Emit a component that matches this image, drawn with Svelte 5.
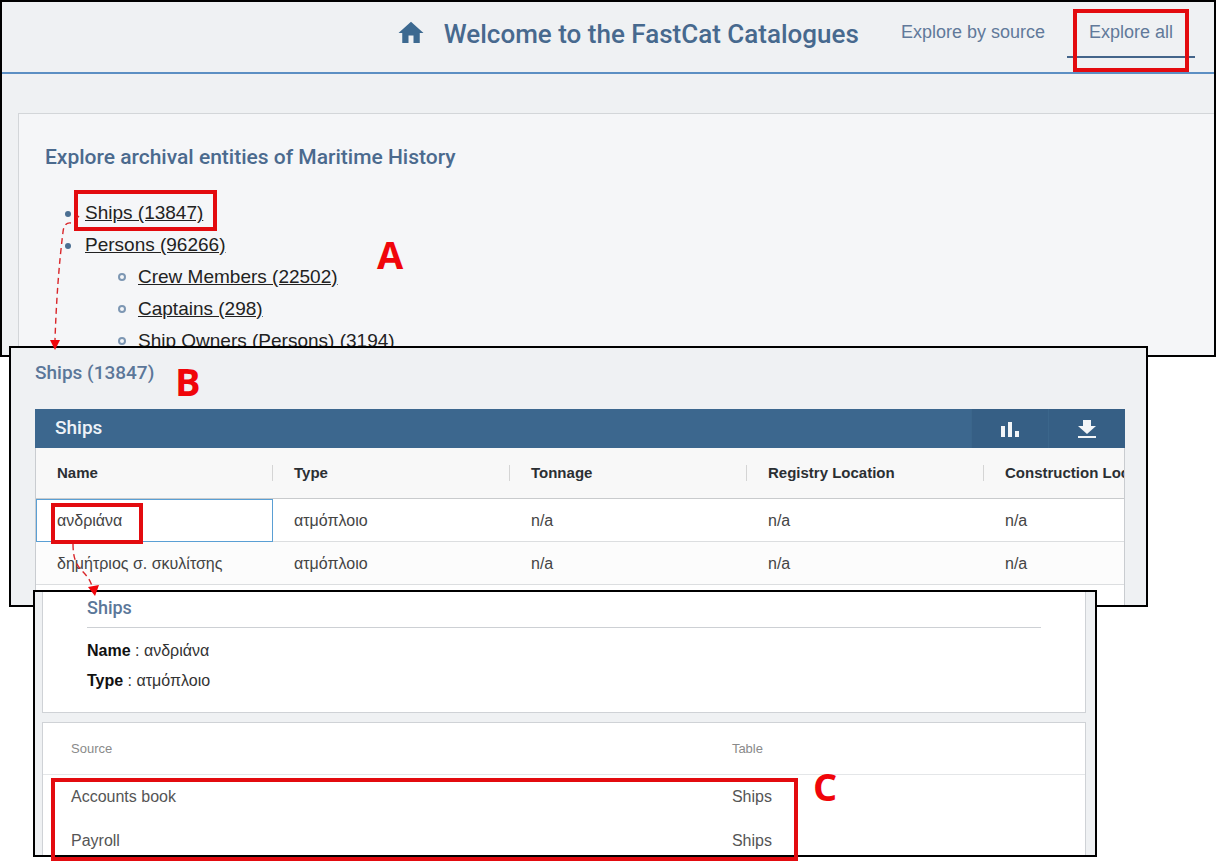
<script>
  const persons = [
    { label: 'Crew Members', count: 22502 },
    { label: 'Captains', count: 298 },
    { label: 'Ship Owners (Persons)', count: 3194 }
  ];

  const columns = ['Name', 'Type', 'Tonnage', 'Registry Location', 'Construction Location'];

  const ships = [
    ['ανδριάνα', 'ατμόπλοιο', 'n/a', 'n/a', 'n/a'],
    ['δημήτριος σ. σκυλίτσης', 'ατμόπλοιο', 'n/a', 'n/a', 'n/a']
  ];

  const sources = [
    { source: 'Accounts book', table: 'Ships' },
    { source: 'Payroll', table: 'Ships' }
  ];

  let selected = $state(0);
</script>

<main class="walkthrough">
  <section class="panel explore">
    <header class="top-bar">
      <svg class="home" viewBox="0 0 24 24" aria-hidden="true">
        <path d="M10 20v-6h4v6h5v-8h3L12 3 2 12h3v8z" />
      </svg>
      <h1>Welcome to the FastCat Catalogues</h1>
      <nav>
        <a href="#source">Explore by source</a>
        <a href="#all" class="active">Explore all<span class="mark mark-nav"></span></a>
      </nav>
    </header>
    <div class="entities">
      <h2>Explore archival entities of Maritime History</h2>
      <ul>
        <li>
          <a href="#ships">Ships (13847)<span class="mark mark-link"></span></a>
        </li>
        <li>
          <a href="#persons">Persons (96266)</a>
          <ul>
            {#each persons as { label, count }}
              <li><a href="#persons">{label} ({count})</a></li>
            {/each}
          </ul>
        </li>
      </ul>
    </div>
    <b class="letter letter-a">A</b>
  </section>

  <section class="panel list">
    <h2>Ships (13847)</h2>
    <b class="letter letter-b">B</b>
    <div class="grid-bar">
      <h3>Ships</h3>
      <button aria-label="Show chart">
        <svg viewBox="0 0 18 18" width="18" height="18">
          <path d="M0 6h4v11H0zM7 2h4v15H7zM14 11h4v6h-4z" />
        </svg>
      </button>
      <button aria-label="Download">
        <svg viewBox="0 0 18 18" width="18" height="18">
          <path d="M5 0h8v6h5l-9 8-9-8h5zM0 16h18v2H0z" />
        </svg>
      </button>
    </div>
    <div class="grid">
      <table>
        <thead>
          <tr>
            {#each columns as column}
              <th><span>{column}</span></th>
            {/each}
          </tr>
        </thead>
        <tbody>
          {#each ships as ship, row}
            <tr>
              {#each ship as value, col}
                <td class:selected={row === selected && col === 0} onclick={() => (selected = row)}>
                  {value}
                  {#if row === 0 && col === 0}<span class="mark mark-cell"></span>{/if}
                </td>
              {/each}
            </tr>
          {/each}
        </tbody>
      </table>
    </div>
  </section>

  <section class="panel detail">
    <div class="card summary">
      <h3>Ships</h3>
      <p><b>Name</b> : ανδριάνα</p>
      <p><b>Type</b> : ατμόπλοιο</p>
    </div>
    <div class="card sources">
      <table>
        <thead>
          <tr><th>Source</th><th>Table</th></tr>
        </thead>
        <tbody>
          {#each sources as item}
            <tr><td>{item.source}</td><td>{item.table}</td></tr>
          {/each}
        </tbody>
      </table>
    </div>
    <span class="mark mark-sources"></span>
    <b class="letter letter-c">C</b>
  </section>

  <svg class="arrows" viewBox="0 0 120 620" width="120" height="620" aria-hidden="true">
    <path class="dash" d="M79 216L77 218M71 223Q64 222 63 232Q57 280 55 340" />
    <path class="head" d="M50 340h10l-5 10z" />
    <path class="dash" d="M73 544C73 572 86 568 92 586" />
    <path class="head" d="M88 587l11-2-4 11z" />
  </svg>
</main>

<style>
  :global(body) {
    background: #fff;
  }

  .walkthrough {
    position: relative;
    padding-bottom: 4px;
    font-family: "Liberation Sans", Arial, sans-serif;
    color: #333;
  }

  h1, h2, h3, p, ul {
    margin: 0;
    padding: 0;
  }

  h1, h2, h3 {
    font-family: Roboto, sans-serif;
    font-weight: 500;
    color: #4b6a8e;
  }

  .panel {
    position: relative;
    box-sizing: border-box;
    border: 2px solid #000;
    background: #eff1f3;
  }

  /* header */
  .explore {
    overflow: hidden;
  }

  .top-bar {
    display: flex;
    align-items: flex-start;
    justify-content: flex-end;
    height: 70px;
    padding-right: 19px;
    border-bottom: 2px solid #5c8fc3;
  }

  .home {
    width: 30px;
    height: 30px;
    margin: 16px 18px 0 0;
    fill: #3c6990;
  }

  h1 {
    margin-right: 20px;
    font-size: 26px;
    line-height: 64px;
    color: #47698e;
  }

  nav {
    display: flex;
  }

  nav a {
    position: relative;
    padding: 19px 22px 13px;
    border-bottom: 2px solid transparent;
    font-size: 18px;
    line-height: 22px;
    color: #61799a;
    text-decoration: none;
  }

  nav a.active {
    border-color: #44658a;
  }

  /* entity tree */
  .entities {
    margin: 39px 0 0 16px;
    padding: 31px 26px 0;
    border: solid #d3d6d9;
    border-width: 1px 0 0 1px;
    background: #f5f6f8;
  }

  .entities h2 {
    margin-bottom: 28px;
    font-size: 21px;
    line-height: 24px;
  }

  .entities ul {
    padding-left: 40px;
    list-style: none;
    font-size: 19px;
    line-height: 32px;
  }

  .entities > ul {
    margin-bottom: -2px;
  }

  .entities ul ul {
    padding-left: 53px;
  }

  .entities li::before {
    content: "";
    display: inline-block;
    box-sizing: border-box;
    width: 6px;
    height: 6px;
    margin: 0 14px 2px -20px;
    border-radius: 50%;
    background: #4b6f92;
  }

  .entities ul ul li::before {
    width: 8px;
    height: 8px;
    margin: 0 12px 2px -20px;
    border: 2px solid #7d97b3;
    background: none;
  }

  .entities a {
    position: relative;
    color: #222;
  }

  /* ships list */
  .list {
    margin: -11px 68px 0 9px;
    padding: 13px 21px 0 24px;
  }

  .list h2 {
    margin-bottom: 24px;
    font-size: 19px;
    line-height: 24px;
    color: #5b7799;
  }

  .grid-bar {
    display: flex;
    height: 39px;
    background: #3c678e;
  }

  .grid-bar h3 {
    flex: 1;
    padding-left: 20px;
    font-size: 19px;
    line-height: 38px;
    color: #eef3f8;
  }

  .grid-bar button {
    display: flex;
    align-items: center;
    justify-content: center;
    width: 77px;
    padding: 0;
    border: 0;
    border-left: 1px solid #3b668b;
    background: #365f85;
    cursor: pointer;
  }

  .grid-bar svg {
    fill: #f2f5f8;
  }

  .grid {
    overflow: hidden;
    padding-bottom: 20px;
    border: solid #c9ccd0;
    border-width: 0 1px;
    background: #fff;
  }

  table {
    border-collapse: separate;
    border-spacing: 0;
    table-layout: fixed;
    text-align: left;
  }

  th, td {
    box-sizing: border-box;
    padding: 0;
  }

  .grid table {
    width: 1185px;
  }

  .grid th {
    height: 51px;
    padding-left: 21px;
    border-bottom: 1px solid #c9cbcd;
    background: #f8f8f8;
    font-size: 15px;
    color: #2b2f33;
  }

  .grid th span {
    display: block;
    line-height: 16px;
    border-right: 1px solid #d5d5d5;
    white-space: nowrap;
  }

  .grid td {
    position: relative;
    height: 43px;
    padding: 1px 0 0 21px;
    border-bottom: 1px solid #dcdee0;
    font-size: 16px;
    color: #444;
    white-space: nowrap;
  }

  .grid tr:nth-child(even) td {
    background: #fcfcfc;
  }

  .grid td.selected {
    outline: 1px solid #5a9fd4;
    outline-offset: -1px;
  }

  /* ship detail */
  .detail {
    margin: -17px 119px 0 33px;
    padding: 0 9px 0 7px;
  }

  .card {
    border: 1px solid #cfd2d6;
    background: #fff;
  }

  .summary {
    border-top: 0;
    margin-bottom: 9px;
    padding: 4px 44px 16px;
  }

  .summary h3 {
    margin-bottom: 8px;
    padding-bottom: 7px;
    border-bottom: 1px solid #cdd0d4;
    font-size: 18px;
    line-height: 24px;
    color: #5b7799;
  }

  .summary p {
    font-size: 16px;
    line-height: 30px;
  }

  .summary p b {
    color: #111;
  }

  .sources {
    overflow: hidden;
    border-bottom: 0;
  }

  .sources table {
    width: 100%;
    margin-bottom: -8px;
  }

  .sources th, .sources td {
    height: 44px;
    padding-left: 28px;
    font-size: 16px;
    color: #555;
  }

  .sources th {
    height: 52px;
    border-bottom: 1px solid #e4e6e8;
    font-size: 13px;
    font-weight: 400;
    color: #8a8a8a;
  }

  .sources th:first-child {
    width: 64%;
  }

  .sources th + th, .sources td + td {
    padding-left: 22px;
  }

  /* annotations */
  .mark {
    position: absolute;
    box-sizing: border-box;
    border: 4px solid #e30b0f;
    pointer-events: none;
  }

  .mark-nav {
    inset: 7px 6px -16px;
  }

  .mark-link {
    inset: -12px -14px -8px -11px;
  }

  .mark-cell {
    left: 15px;
    top: 4px;
    width: 92px;
    height: 41px;
    z-index: 1;
  }

  .mark-sources {
    left: 16px;
    top: 186px;
    bottom: -6px;
    width: 70.5%;
  }

  .letter {
    position: absolute;
    font-family: "Open Sans", sans-serif;
    font-size: 38px;
    line-height: 40px;
    color: #f0050a;
  }

  .letter-a {
    left: 375px;
    top: 232px;
  }

  .letter-b {
    left: 164px;
    top: 13px;
  }

  .letter-c {
    left: 778px;
    top: 174px;
  }

  .arrows {
    position: absolute;
    left: 0;
    top: 0;
    pointer-events: none;
  }

  .dash {
    fill: none;
    stroke: #d9262a;
    stroke-width: 1.4;
    stroke-dasharray: 6 4;
  }

  .head {
    fill: #f0050a;
  }
</style>
